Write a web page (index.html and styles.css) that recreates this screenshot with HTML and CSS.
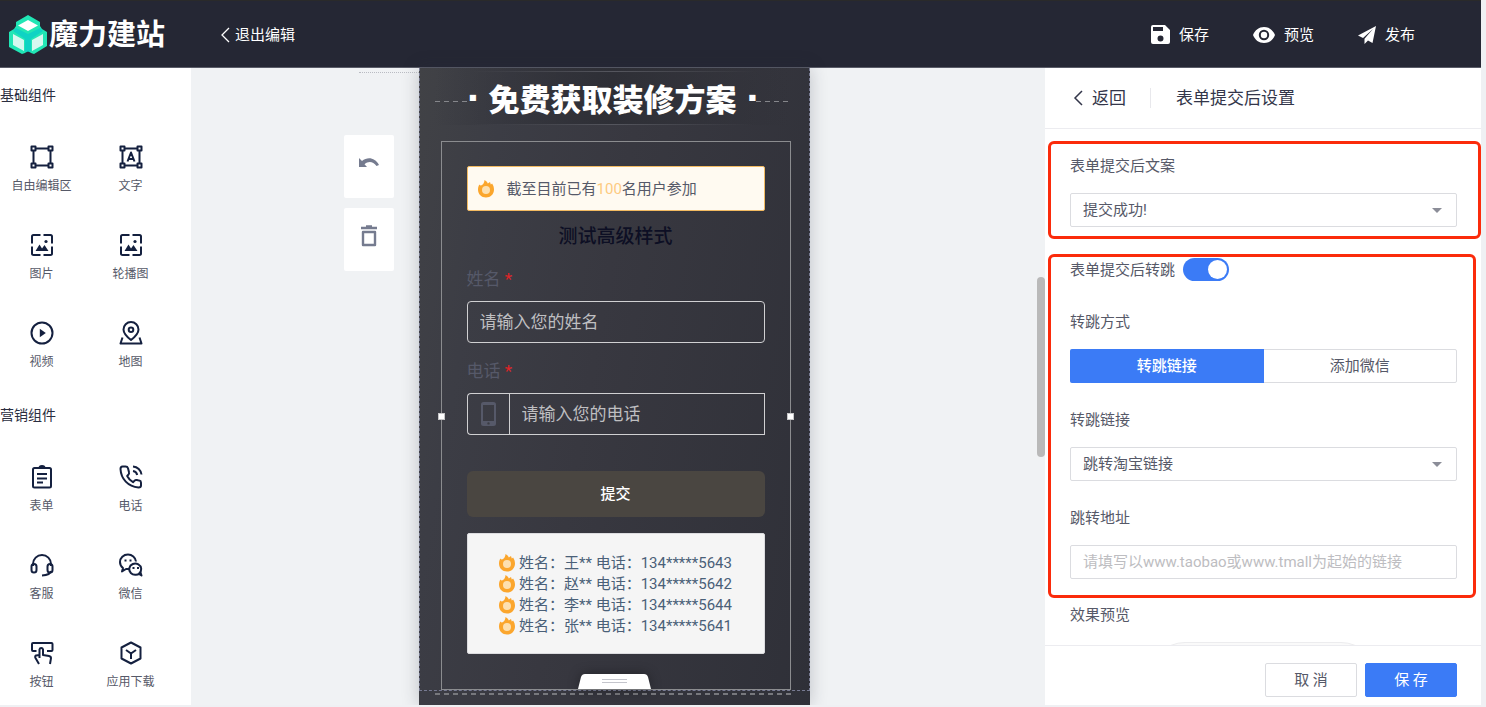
FILE: index.html
```
<!DOCTYPE html>
<html lang="zh-CN">
<head>
    <meta charset="UTF-8">
    <meta name="viewport" content="width=device-width, initial-scale=1.0">
    <title>魔力建站</title>
    <link rel="stylesheet" href="styles.css">
</head>
<body>
    <!-- shared icon -->
    <svg class="sprite" aria-hidden="true">
        <symbol id="flame" viewBox="0 0 16 18">
            <path fill="#fba62d" d="M6.500 0C8 .8 9.500 2 9.800 3.600L12 2l.8 2.500c.6-.2 1-.5 1.300-1C15.300 5.300 16 7.300 16 9.500 16 14.300 12.500 17.500 8 17.500S0 14.300 0 9.500C0 7.500.5 5.800 1.500 4.500c.3.600.8 1 1.500 1C5 4.800 6.500 2.500 6.500 0z"/>
            <circle cx="8" cy="10" r="4" fill="#fde0b0"/>
        </symbol>
    </svg>

    <div class="app">
        <header class="topbar">
            <div class="brand">
                <svg width="38" height="40" viewBox="0 0 38 40">
                    <path fill="#21e6b5" d="M19 0 31 7v4l2 3 5 3v14l-13 8-6-2-6 2L0 32V17l5-3 2-3V7z"/>
                    <path fill="#0fd3c4" d="M7 13l12 6 12-6 3 3-12 8v12l-3 2-3-2V24L4 16z"/>
                    <path fill="#fff" d="M19 5l10 5.500L19 16 9 10.500z"/>
                    <path fill="#d6f8f0" d="M4 19l11 6v11L4 30zM34 19l-11 6v11l11-6z"/>
                    <path fill="#252734" d="M16 38l3-1.500 3 1.500v2h-6z"/>
                </svg>
                <span class="brand-name">魔力建站</span>
            </div>
            <button type="button" class="top-btn back-btn">
                <svg width="10" height="16" viewBox="0 0 10 16"><path d="M9 1 2 8l7 7" fill="none" stroke="currentColor" stroke-width="1.300"/></svg>
                退出编辑
            </button>
            <nav class="top-actions">
                <button type="button" class="top-btn">
                    <svg width="19" height="19" viewBox="0 0 19 19"><path fill="#fff" fill-rule="evenodd" d="M2 0h12l5 5v12a2 2 0 0 1-2 2H2a2 2 0 0 1-2-2V2a2 2 0 0 1 2-2zm0 2v4h10V2zm7.500 8.500a3 3 0 1 0 0 6 3 3 0 0 0 0-6z"/></svg>
                    保存
                </button>
                <button type="button" class="top-btn">
                    <svg width="22" height="16" viewBox="0 0 22 16"><path fill="#fff" fill-rule="evenodd" d="M11 0c5 0 9 3 11 8-2 5-6 8-11 8S2 13 0 8c2-5 6-8 11-8zm0 2.800a5.200 5.200 0 1 0 0 10.400A5.200 5.200 0 0 0 11 2.800z"/><circle cx="11" cy="8" r="3.200" fill="#fff"/></svg>
                    预览
                </button>
                <button type="button" class="top-btn">
                    <svg width="18" height="18" viewBox="0 0 18 18"><path fill="#fff" d="M18 0 0 9.500l5 2.500L15 3 6.500 12.800V18l3.500-3.500 4.500 2.500z"/></svg>
                    发布
                </button>
            </nav>
        </header>

        <main class="workspace">
            <aside class="sidebar">
                <h2 class="group-title">基础组件</h2>
                <div class="widgets">
                    <div class="widget">
                        <svg class="icon" viewBox="0 0 24 24"><path d="M3.500 6v12M20.500 6v12M6 3.500h12M6 20.500h12M1.500 1.500h4v4h-4zM18.500 1.500h4v4h-4zM1.500 18.500h4v4h-4zM18.500 18.500h4v4h-4z"/></svg>
                        <span>自由编辑区</span>
                    </div>
                    <div class="widget">
                        <svg class="icon" viewBox="0 0 24 24"><path d="M3.500 6v12M20.500 6v12M6 3.500h12M6 20.500h12M1.500 1.500h4v4h-4zM18.500 1.500h4v4h-4zM1.500 18.500h4v4h-4zM18.500 18.500h4v4h-4zM8.500 16.500 12 7.500l3.500 9M9.500 14h5"/></svg>
                        <span>文字</span>
                    </div>
                    <div class="widget">
                        <svg class="icon" viewBox="0 0 24 24"><path d="M10.500 2H3.500A1.500 1.500 0 0 0 2 3.500v7M13.500 2h7A1.500 1.500 0 0 1 22 3.500v7M2 13.500v7A1.500 1.500 0 0 0 3.500 22h7M22 13.500v7a1.500 1.500 0 0 1-1.500 1.500h-7"/><path class="solid" d="M5.500 18l4-6.500 2.500 4 2.500-3.500 4 6z"/><circle class="solid" cx="16" cy="8.500" r="1.600"/></svg>
                        <span>图片</span>
                    </div>
                    <div class="widget">
                        <svg class="icon" viewBox="0 0 24 24"><path d="M10.500 2H3.500A1.500 1.500 0 0 0 2 3.500v7M13.500 2h7A1.500 1.500 0 0 1 22 3.500v7M2 13.500v7A1.500 1.500 0 0 0 3.500 22h7M22 13.500v7a1.500 1.500 0 0 1-1.500 1.500h-7"/><path class="solid" d="M5.500 18l4-6.500 2.500 4 2.500-3.500 4 6z"/><circle class="solid" cx="16" cy="8.500" r="1.600"/></svg>
                        <span>轮播图</span>
                    </div>
                    <div class="widget">
                        <svg class="icon" viewBox="0 0 24 24"><circle cx="12" cy="12" r="10.500"/><path class="solid" d="M9.800 7.800l6 4.200-6 4.200z"/></svg>
                        <span>视频</span>
                    </div>
                    <div class="widget">
                        <svg class="icon" viewBox="0 0 24 24"><path d="M12 19c-4.500-3.500-7.500-6.500-7.500-10.500a7.500 7.500 0 0 1 15 0c0 4-3 7-7.500 10.500zM3.500 16.500 1.500 22.500h21l-2-6"/><circle cx="12" cy="8.800" r="2.300"/></svg>
                        <span>地图</span>
                    </div>
                </div>
                <h2 class="group-title">营销组件</h2>
                <div class="widgets">
                    <div class="widget">
                        <svg class="icon" viewBox="0 0 24 24"><rect x="3" y="3" width="18" height="19.500" rx="1.500"/><path d="M7 9h10M7 13.500h10M7 17.500h6M9.500 3a2.500 2 0 0 1 5 0"/></svg>
                        <span>表单</span>
                    </div>
                    <div class="widget">
                        <svg class="icon" viewBox="0 0 24 24"><path d="M6.500 1.500H3.500c-1.200 0-2 1-2 2.500C2 14 9 21.500 19.500 22.500c1.500 0 2.500-.8 2.500-2v-2.800c0-1-.7-1.900-1.700-2.100l-2.500-.6c-.8-.2-1.600 0-2.200.6l-1.600 1.600C11.500 15.800 9.500 13.600 8.200 11l1.400-1.700c.5-.6.6-1.400.4-2.100L9 3.200c-.3-1-1.300-1.700-2.500-1.700zM14 1.500c4.500.3 8 3.600 8.500 8M14 6c2.200.3 3.800 1.800 4.200 4"/></svg>
                        <span>电话</span>
                    </div>
                    <div class="widget">
                        <svg class="icon" viewBox="0 0 24 24"><path d="M3 13v-2a9 9 0 0 1 18 0v2M21 18c-.5 3-3.500 4.300-9 4.500"/><rect x="1.500" y="11" width="5" height="8.500" rx="2.500"/><rect x="17.500" y="11" width="5" height="8.500" rx="2.500"/></svg>
                        <span>客服</span>
                    </div>
                    <div class="widget">
                        <svg class="icon" viewBox="0 0 24 24"><path d="M17 8.500C16.500 4.500 13 1.500 9 1.500c-4.500 0-8 3.300-8 7.500 0 2.500 1.200 4.700 3 6L3 18.500 7 16h3M20 20.500a6 5.600 0 1 0-3 1.200c1.500 0 2.300-.3 3-.8l2.500 1.600-1-3"/><path class="solid" d="M5.500 6.500h2v2h-2zM10.500 6.500h2v2h-2zM13.500 14h2v2h-2zM18 14h2v2h-2z"/></svg>
                        <span>微信</span>
                    </div>
                    <div class="widget">
                        <svg class="icon" viewBox="0 0 24 24"><path d="M6.500 10H3A1 1 0 0 1 2 9V3a1 1 0 0 1 1-1h18.500a1 1 0 0 1 1 1v6a1 1 0 0 1-1 1H17M9.500 17V8.500a1.800 1.800 0 0 1 3.500 0V14l6 1c1.200.2 2 1 2 2.200L20 23M9.500 14 6 14.500c-1 .5-1 1.500-.5 2.500L9 23"/></svg>
                        <span>按钮</span>
                    </div>
                    <div class="widget">
                        <svg class="icon" viewBox="0 0 24 24"><path d="M12 1.500l9.500 5v11l-9.500 5-9.500-5v-11zM7 9l5 3.500L17 9M12 12.500V18"/></svg>
                        <span>应用下载</span>
                    </div>
                </div>
            </aside>

            <section class="canvas">
                <div class="stage">
                    <div class="phone">
                        <div class="tools">
                            <button type="button" class="tool" aria-label="撤销">
                                <svg width="20" height="20" viewBox="0 0 20 20"><path fill="#757b8f" d="M0 5v9h8L5.500 11.200C9 8 14 8 17.500 13l2.500-1C16 4.500 8.500 3.500 3 8z"/></svg>
                            </button>
                            <button type="button" class="tool" aria-label="删除">
                                <svg width="18" height="22" viewBox="0 0 18 22"><path fill="none" stroke="#757b8f" stroke-width="2.400" stroke-linejoin="round" d="M1 3h16M6 1.500h6M3 7h12v13H3z"/></svg>
                            </button>
                        </div>
                        <div class="phone-page">
                            <div class="banner">
                                <h1><span class="dot">■</span>免费获取装修方案<span class="dot">■</span></h1>
                            </div>
                            <form class="lead-form">
                                <p class="notice">
                                    <svg width="16" height="18"><use href="#flame"/></svg>
                                    <span>截至目前已有<em>100</em>名用户参加</span>
                                </p>
                                <h2 class="form-title">测试高级样式</h2>
                                <label class="lead-label" for="lead-name">姓名 <b>*</b></label>
                                <input class="lead-input" id="lead-name" type="text" placeholder="请输入您的姓名">
                                <label class="lead-label" for="lead-phone">电话 <b>*</b></label>
                                <div class="phone-field">
                                    <span class="phone-prefix">
                                        <svg width="15" height="24" viewBox="0 0 15 24"><path fill="#565969" fill-rule="evenodd" d="M2.500 0h10A2.500 2.500 0 0 1 15 2.500v19a2.500 2.500 0 0 1-2.500 2.500h-10A2.500 2.500 0 0 1 0 21.500v-19A2.500 2.500 0 0 1 2.500 0zM2 3v16h11V3zm5.500 17.200a1.200 1.200 0 1 0 0 2.400 1.200 1.200 0 0 0 0-2.400z"/></svg>
                                    </span>
                                    <input class="lead-input" id="lead-phone" type="tel" placeholder="请输入您的电话">
                                </div>
                                <button type="button" class="lead-submit">提交</button>
                                <ul class="records">
                                    <li><svg width="16" height="18"><use href="#flame"/></svg>姓名：王** 电话：134*****5643</li>
                                    <li><svg width="16" height="18"><use href="#flame"/></svg>姓名：赵** 电话：134*****5642</li>
                                    <li><svg width="16" height="18"><use href="#flame"/></svg>姓名：李** 电话：134*****5644</li>
                                    <li><svg width="16" height="18"><use href="#flame"/></svg>姓名：张** 电话：134*****5641</li>
                                </ul>
                                <svg class="drag-tab" width="73" height="15" viewBox="0 0 73 15"><path fill="#fff" d="M0 15 3 3Q4 0 7 0h59q3 0 4 3l3 12z"/><path stroke="#c4c5cc" d="M24 5.500h25M24 8.500h25"/></svg>
                                <i class="handle handle-left"></i>
                                <i class="handle handle-right"></i>
                            </form>
                        </div>
                        <div class="next-block"></div>
                    </div>
                </div>
                <div class="scrollbar"><div class="thumb"></div></div>
            </section>

            <aside class="panel">
                <div class="panel-head">
                    <button type="button" class="panel-back">
                        <svg width="10" height="16" viewBox="0 0 10 16"><path d="M9 1 2 8l7 7" fill="none" stroke="currentColor" stroke-width="1.500"/></svg>
                        返回
                    </button>
                    <h2>表单提交后设置</h2>
                </div>
                <div class="panel-body">
                    <div class="marked marked-text">
                        <label class="field-label" for="done-text">表单提交后文案</label>
                        <div class="select-box">
                            <select id="done-text"><option>提交成功!</option></select>
                        </div>
                    </div>
                    <div class="marked marked-jump">
                        <div class="switch-row">
                            <label for="jump-on">表单提交后转跳</label>
                            <input class="switch" id="jump-on" type="checkbox" checked>
                        </div>
                        <span class="field-label" id="jump-mode">转跳方式</span>
                        <div class="segmented" role="radiogroup" aria-labelledby="jump-mode">
                            <label><input type="radio" name="mode" checked>转跳链接</label>
                            <label><input type="radio" name="mode">添加微信</label>
                        </div>
                        <label class="field-label" for="jump-link">转跳链接</label>
                        <div class="select-box">
                            <select id="jump-link"><option>跳转淘宝链接</option></select>
                        </div>
                        <label class="field-label" for="jump-url">跳转地址</label>
                        <input class="text-input" id="jump-url" type="text" placeholder="请填写以www.taobao或www.tmall为起始的链接">
                    </div>
                    <span class="field-label preview-label">效果预览</span>
                    <div class="preview"></div>
                </div>
                <div class="panel-foot">
                    <button type="button" class="btn">取 消</button>
                    <button type="button" class="btn btn-primary">保 存</button>
                </div>
            </aside>
        </main>
    </div>
</body>
</html>
```
FILE: styles.css
```
* {
    margin: 0;
    padding: 0;
    box-sizing: border-box;
}

body {
    font-family: Roboto, "Noto Sans CJK SC", sans-serif;
    font-size: 15px;
    line-height: 20px;
    color: #565968;
    background: #eff0f3;
    overflow: hidden;
}

button,
input,
select {
    font: inherit;
    color: inherit;
}

button {
    border: none;
    background: none;
    cursor: pointer;
}

svg {
    display: block;
    flex: none;
}

.sprite {
    position: absolute;
    width: 0;
    height: 0;
}

.app {
    display: flex;
    flex-direction: column;
    height: calc(100vh - 2px);
    margin-right: 5px;
}

/* top bar */
.topbar {
    display: flex;
    align-items: center;
    flex: none;
    height: 68px;
    padding: 1px 66px 0 9px;
    background: #252734;
    border-top: 1px solid #2a2a2a;
    border-bottom: 1px solid #5a5c68;
    color: #fff;
}

.brand {
    display: flex;
    align-items: center;
    gap: 2px;
}

.brand-name {
    font-size: 29px;
    font-weight: 700;
    line-height: 40px;
}

.top-btn {
    display: flex;
    align-items: center;
    gap: 9px;
}

.back-btn {
    gap: 5px;
    margin-left: 55px;
}

.top-actions {
    display: flex;
    gap: 44px;
    margin-left: auto;
}

.workspace {
    display: flex;
    flex: 1;
    min-height: 0;
}

/* component list */
.sidebar {
    flex: none;
    width: 191px;
    padding-top: 17px;
    background: #fff;
    overflow: hidden;
}

.group-title {
    font-size: 14px;
    font-weight: 400;
    color: #2b2e40;
}

.widgets {
    display: grid;
    grid-template-columns: 89px 89px;
    gap: 38px 0;
    margin: 40px 0 34px -3px;
}

.widget {
    display: flex;
    flex-direction: column;
    align-items: center;
    gap: 8px;
    font-size: 12px;
    line-height: 18px;
}

.icon {
    width: 24px;
    height: 24px;
    fill: none;
    stroke: #14203f;
    stroke-width: 2;
    stroke-linejoin: round;
}

.icon .solid {
    fill: #14203f;
    stroke: none;
}

/* canvas */
.canvas {
    display: flex;
    flex: 1;
    min-width: 0;
    background: #f0f2f4;
}

.stage {
    display: flex;
    justify-content: center;
    flex: 1;
}

.phone {
    position: relative;
    display: flex;
    flex-direction: column;
    width: 391px;
    background: linear-gradient(100deg, #414246 0%, #3c3d45 18%, #383840 45%, #2f3038 100%);
    box-shadow: 0 0 16px rgba(40, 42, 60, 0.25);
}

.phone::before {
    content: "";
    position: absolute;
    top: 4px;
    right: 100%;
    width: 60px;
    border-top: 1px dotted #b9bbc2;
}

.tools {
    position: absolute;
    top: 67px;
    right: calc(100% + 25px);
    display: grid;
    gap: 10px;
}

.tool {
    display: grid;
    place-items: center;
    width: 50px;
    height: 63px;
    padding-bottom: 8px;
    background: #fff;
    border-radius: 2px;
}

.phone-page {
    flex: none;
    padding: 0 18px 0 21px;
    border: 1px dashed #777a92;
    border-top: none;
}

.banner {
    display: flex;
    align-items: center;
    height: 57px;
    margin: 0 0 16px -6px;
    background:
        linear-gradient(90deg, transparent 10%, #55565e 50%, transparent 90%) 0 3px / 100% 1px no-repeat,
        linear-gradient(90deg, transparent 10%, #55565e 50%, transparent 90%) 0 100% / 100% 1px no-repeat,
        linear-gradient(90deg, transparent, #2e2f36 50%, transparent);
}

.banner::before,
.banner::after {
    content: "";
    flex: 1;
    height: 1px;
    margin-top: 10px;
    background: repeating-linear-gradient(90deg, #85868b 0 5px, transparent 5px 9px);
}

.banner h1 {
    display: flex;
    gap: 12px;
    padding-top: 3px;
    font-family: "Noto Sans CJK SC", sans-serif;
    font-size: 31px;
    font-weight: 900;
    line-height: 40px;
    color: #fff;
}

.banner .dot {
    font-family: "DejaVu Sans", sans-serif;
    font-size: 8px;
    font-weight: 400;
}

.lead-form {
    position: relative;
    display: flex;
    flex-direction: column;
    height: 549px;
    padding: 24px 25px 0;
    border: 1px solid #8b8c8f;
}

.notice {
    display: flex;
    align-items: center;
    gap: 13px;
    height: 45px;
    padding: 0 10px;
    background: #fffaf1;
    border: 1px solid #f2ba61;
    border-radius: 2px;
}

.notice em {
    font-style: normal;
    color: #fdca81;
}

.form-title {
    margin: 14px 0 20px;
    font-size: 19px;
    font-weight: 500;
    line-height: 24px;
    text-align: center;
    color: #0d0f24;
}

.lead-label {
    margin-bottom: 12px;
    font-size: 17px;
    color: #565969;
}

.lead-label b {
    font-weight: 400;
    color: #e02427;
}

.lead-input {
    width: 100%;
    height: 42px;
    margin-bottom: 18px;
    padding: 0 12px;
    font-size: 17px;
    color: #fff;
    background: transparent;
    border: 1px solid #d0d0d2;
    border-radius: 4px;
}

.lead-input::placeholder {
    color: #bfbfc1;
}

.phone-field {
    display: flex;
    margin-bottom: 36px;
}

.phone-prefix {
    display: grid;
    place-items: center;
    flex: none;
    width: 42px;
    border: 1px solid #d0d0d2;
    border-right: none;
    border-radius: 4px 0 0 4px;
}

.phone-field .lead-input {
    margin-bottom: 0;
    border-radius: 0;
}

.lead-submit {
    height: 46px;
    font-weight: 500;
    color: #fff;
    background: #4a4641;
    border-radius: 6px;
}

.records {
    display: flex;
    flex-direction: column;
    align-items: center;
    margin-top: 16px;
    padding: 19px 0 16px;
    list-style: none;
    line-height: 21px;
    color: #4a6078;
    background: #f5f5f5;
    border: 1px solid #dcdcdf;
    border-radius: 2px;
}

.records li {
    display: flex;
    align-items: center;
    gap: 4px;
}

.records svg {
    margin-bottom: 2px;
}

.drag-tab {
    position: absolute;
    left: 136px;
    bottom: 0;
    filter: drop-shadow(0 0 6px rgba(0, 0, 0, 0.35));
}

.handle {
    position: absolute;
    top: 271px;
    width: 7px;
    height: 7px;
    background: #fff;
    border: 1px solid #c6c6c8;
}

.handle-left {
    left: -4px;
}

.handle-right {
    right: -4px;
}

.next-block {
    flex: 1;
    margin: 2px 18px 0 16px;
    background: repeating-linear-gradient(90deg, #77787d 0 5px, transparent 5px 9px) 0 0 / 100% 2px no-repeat;
}

.scrollbar {
    width: 8px;
    flex: none;
}

.thumb {
    height: 180px;
    margin-top: 209px;
    background: #b9b9b9;
    border-radius: 4px;
}

/* settings panel */
.panel {
    display: flex;
    flex-direction: column;
    flex: none;
    width: 436px;
    background: #fff;
}

.panel-head {
    display: flex;
    align-items: center;
    flex: none;
    height: 61px;
    padding-left: 28px;
    border-bottom: 1px solid #ececf0;
    font-size: 17px;
    color: #33364a;
}

.panel-head h2 {
    padding-left: 25px;
    border-left: 1px solid #e8e8ec;
    font-size: 17px;
    font-weight: 400;
}

.panel-back {
    display: flex;
    align-items: center;
    gap: 9px;
    margin-right: 24px;
}

.panel-body {
    flex: 1;
    min-height: 0;
    overflow: hidden;
}

.marked {
    margin-left: 3px;
    border: 3px solid #fb2b0b;
    border-radius: 6px;
}

.marked-text {
    margin-top: 12px;
    padding: 12px 21px 9px 19px;
}

.marked-jump {
    margin-top: 15px;
    margin-right: 5px;
    padding: 1px 16px 16px 19px;
}

.field-label {
    display: block;
    margin: 27px 0 17px;
}

.marked-text .field-label {
    margin-top: 0;
}

.switch-row {
    display: flex;
    align-items: center;
    gap: 8px;
    margin-bottom: 31px;
}

.switch {
    appearance: none;
    width: 46px;
    height: 23px;
    padding: 2px;
    background: #3b7bf6;
    border-radius: 12px;
}

.switch::before {
    content: "";
    display: block;
    width: 19px;
    height: 19px;
    margin-left: auto;
    background: #fff;
    border-radius: 50%;
}

.select-box {
    position: relative;
}

.select-box::after {
    content: "";
    position: absolute;
    top: 15px;
    right: 15px;
    border: 5px solid transparent;
    border-top-color: #8b8d98;
    border-bottom: none;
    pointer-events: none;
}

.select-box select,
.text-input {
    display: block;
    width: 100%;
    height: 34px;
    padding: 0 12px;
    appearance: none;
    background: #fff;
    border: 1px solid #dbdce0;
    border-radius: 2px;
}

.text-input::placeholder {
    color: #bdbdc1;
}

.segmented {
    display: grid;
    grid-template-columns: 1fr 1fr;
    height: 34px;
    border: 1px solid #dbdce0;
    border-radius: 2px;
}

.segmented label {
    display: grid;
    place-items: center;
}

.segmented input {
    position: absolute;
    appearance: none;
}

.segmented label:has(:checked) {
    margin: -1px 0 -1px -1px;
    font-weight: 500;
    color: #fff;
    background: #3b7bf6;
    border-radius: 2px 0 0 2px;
}

.preview-label {
    margin: 7px 25px 17px;
}

.preview {
    width: 228px;
    height: 300px;
    margin: 0 auto;
    border: 1px solid #ececee;
    border-radius: 36px;
    background: #fafafa;
}

.panel-foot {
    display: flex;
    justify-content: flex-end;
    gap: 8px;
    flex: none;
    height: 60px;
    padding: 17px 24px 0;
    border-top: 1px solid #ececf0;
}

.btn {
    width: 92px;
    height: 34px;
    border: 1px solid #dbdce0;
    border-radius: 2px;
}

.btn-primary {
    color: #fff;
    background: #3b7bf6;
    border-color: #3b7bf6;
}
```
